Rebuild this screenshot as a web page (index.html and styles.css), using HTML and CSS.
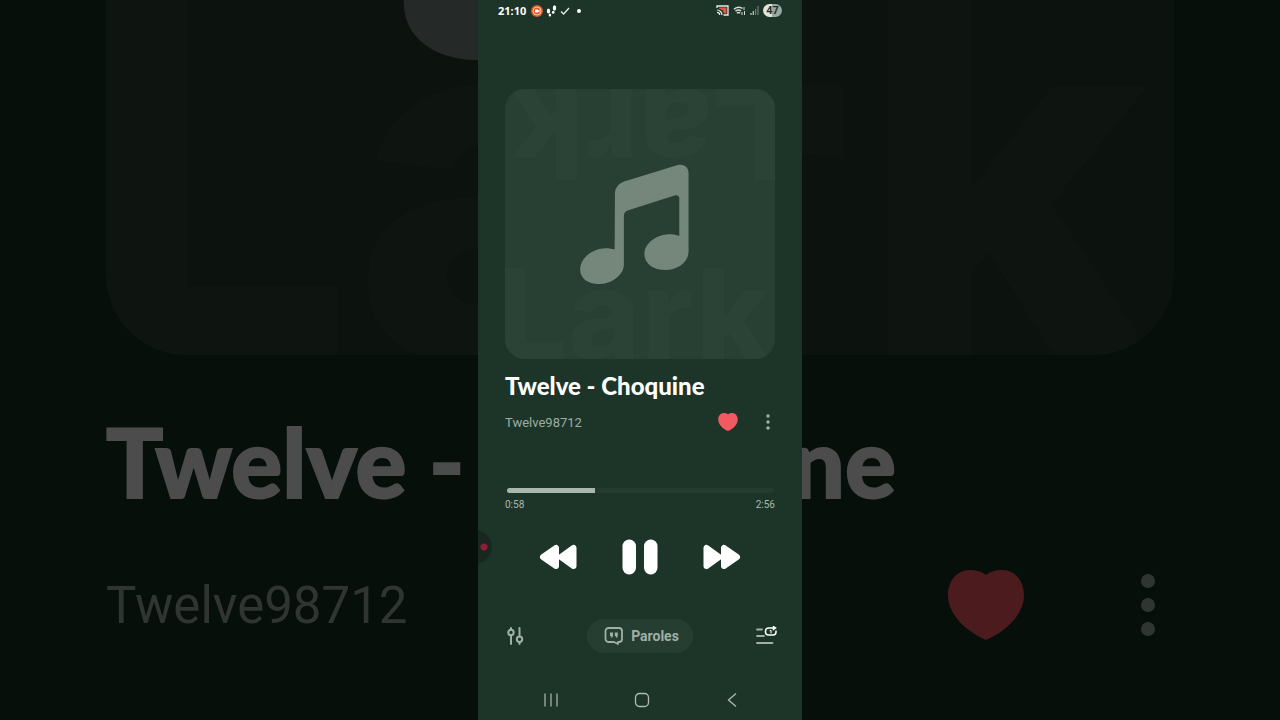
FILE: index.html
```
<!DOCTYPE html>
<html lang="fr">
<head>
  <meta charset="UTF-8">
  <meta name="viewport" content="width=device-width, initial-scale=1">
  <title>Twelve - Choquine</title>
  <link rel="stylesheet" href="styles.css">
</head>
<body>
  <svg class="symbols" aria-hidden="true">
    <symbol id="note" viewBox="0 0 328 362">
      <path d="M105 90C105 70 118 57 135 52L292 4C310 -1 327 8 327 27V265C327 295 295 320 258 320C220 320 194 300 194 272C194 238 232 212 271 212C282 212 291 214 299 217V102C299 96 292 93 285 95L150 138C138 142 132 146 132 157V303C132 335 95 362 56 362C24 362 0 345 0 318C0 284 38 254 77 254C88 254 97 256 104 258Z"/>
    </symbol>
    <symbol id="heart" viewBox="0 0 76 70">
      <path d="M38 5C43 1 49 0 54 0C68 0 76 12 76 25C76 46 56 62 38 70C20 62 0 46 0 25C0 12 8 0 22 0C27 0 33 1 38 5Z"/>
    </symbol>
    <symbol id="dots" viewBox="0 0 16 64">
      <circle cx="8" cy="8" r="7"/><circle cx="8" cy="32" r="7"/><circle cx="8" cy="56" r="7"/>
    </symbol>
  </svg>

  <div class="backdrop" aria-hidden="true">
    <div class="backdrop-art">
      <span class="backdrop-word">Lark</span>
      <svg class="backdrop-note"><use href="#note"/></svg>
    </div>
    <div class="backdrop-title">Twelve - Choquine</div>
    <div class="backdrop-row">
      <span class="backdrop-artist">Twelve98712</span>
      <svg class="backdrop-heart"><use href="#heart"/></svg>
      <svg class="backdrop-dots"><use href="#dots"/></svg>
    </div>
  </div>

  <main class="phone">
    <header class="status-bar">
      <span class="clock">21:10</span>
      <svg class="status-icon" width="12" height="12" viewBox="0 0 12 12">
        <circle cx="6" cy="6" r="6" fill="#e2572b"/>
        <circle cx="6" cy="6" r="4" fill="none" stroke="#f6c9a5"/>
        <path d="M4 4.500h3v1l1.500-1v3l-1.500-1v1H4z" fill="#fff"/>
      </svg>
      <svg class="status-icon" width="11" height="12" viewBox="0 0 11 12" fill="#fff">
        <ellipse cx="2.500" cy="6" rx="1.700" ry="2.500"/><ellipse cx="3.900" cy="10" rx="1.300" ry="1.500"/>
        <ellipse cx="8.500" cy="3" rx="1.700" ry="2.700"/><ellipse cx="7.200" cy="7.200" rx="1.300" ry="1.500"/>
      </svg>
      <svg class="status-icon" width="10" height="10" viewBox="0 0 10 10">
        <path d="M1 5.500L3.600 8L9 2" fill="none" stroke="#e4ebe7" stroke-width="1.300"/>
      </svg>
      <svg class="status-icon status-dot" width="4" height="4" viewBox="0 0 4 4"><circle cx="2" cy="2" r="2" fill="#fff"/></svg>

      <div class="status-right">
        <svg width="13" height="11" viewBox="0 0 13 11">
          <path d="M1 3V1h11v9H7.500" fill="none" stroke="#e8ecea" stroke-width="1.300"/>
          <path d="M3 2.500h7.500v6H8C7.500 5.500 5.500 4 3 3.800z" fill="#e2583f"/>
          <path d="M1 5a5 5 0 0 1 5 5M1 7.300A2.700 2.700 0 0 1 3.700 10" fill="none" stroke="#e8ecea" stroke-width="1.200"/>
        </svg>
        <svg width="13" height="10" viewBox="0 0 13 10" fill="none" stroke="#d5dcd8" stroke-width="1.500">
          <path d="M1 3.200C3.500 .6 7.500 .6 9.500 2.500M2.500 5.300C4 3.600 6.500 3.600 8 5M4 7.300c1-1 2-1 3 0"/>
          <path d="M9 6v3M11.500 9V5M11 1v3" stroke-width="1"/>
        </svg>
        <svg width="9" height="9" viewBox="0 0 9 9">
          <path d="M1 7v2M3.300 5v4" stroke="#c9d1cd" stroke-width="1.200"/>
          <path d="M5.600 3v6M8 0v9" stroke="#6f7f76" stroke-width="1.200"/>
        </svg>
        <span class="battery">47</span>
      </div>
    </header>

    <div class="art">
      <span class="art-word art-word-top" aria-hidden="true">Lark</span>
      <svg class="art-note" role="img" aria-label="Musique"><use href="#note"/></svg>
      <span class="art-word art-word-bottom" aria-hidden="true">Lark</span>
    </div>

    <h1 class="title">Twelve - Choquine</h1>
    <div class="artist-row">
      <span class="artist">Twelve98712</span>
      <button class="icon-button" aria-label="Favori">
        <svg class="heart" width="20" height="18"><use href="#heart"/></svg>
      </button>
      <button class="icon-button more" aria-label="Plus">
        <svg width="4" height="16"><use href="#dots"/></svg>
      </button>
    </div>

    <input class="seek" type="range" min="0" max="176" value="58" aria-label="Position" style="--played: 33%">
    <div class="times">
      <span>0:58</span>
      <span>2:56</span>
    </div>

    <div class="controls">
      <button class="icon-button" aria-label="Précédent">
        <svg width="38" height="26" viewBox="0 0 38 26" fill="#fff" stroke="#fff" stroke-width="6" stroke-linejoin="round">
          <path d="M4 13L17 4V22ZM22 13L34.500 4V22Z"/>
        </svg>
      </button>
      <button class="icon-button" aria-label="Pause">
        <svg width="36" height="36" viewBox="0 0 36 36" fill="#fff">
          <rect x=".5" y=".5" width="13.500" height="35" rx="6.700"/>
          <rect x="22" y=".5" width="13.500" height="35" rx="6.700"/>
        </svg>
      </button>
      <button class="icon-button" aria-label="Suivant">
        <svg width="38" height="26" viewBox="0 0 38 26" fill="#fff" stroke="#fff" stroke-width="6" stroke-linejoin="round">
          <path d="M34 13L21 4V22ZM16 13L3.500 4V22Z"/>
        </svg>
      </button>
    </div>

    <div class="tools">
      <button class="icon-button" aria-label="Égaliseur">
        <svg width="20" height="20" viewBox="0 0 20 20" fill="none" stroke="#9fb0a6" stroke-width="2" stroke-linecap="round">
          <path d="M6 2v1.500M6 9v9M14.500 2v8.500M14.500 16.500V18"/>
          <circle cx="6" cy="6.500" r="2.700"/><circle cx="14.500" cy="13.200" r="2.700"/>
        </svg>
      </button>
      <button class="lyrics">
        <svg width="20" height="20" viewBox="0 0 20 20">
          <path d="M4.500 2h10.500a3 3 0 0 1 3 3v8a3 3 0 0 1-3 3h-1v2l-4-2H4.500a3 3 0 0 1-3-3V5a3 3 0 0 1 3-3z" fill="none" stroke="#9fb0a6" stroke-width="1.800" stroke-linejoin="round"/>
          <path d="M6 6.500h3v3c0 1.500-.8 2.300-2 2.700.4-.8.500-1.400.3-2H6zM10.800 6.500h3v3c0 1.500-.8 2.300-2 2.700.4-.8.500-1.400.3-2h-1.300z" fill="#9fb0a6"/>
        </svg>
        Paroles
      </button>
      <button class="icon-button" aria-label="File d'attente">
        <svg width="22" height="20" viewBox="0 0 22 20" fill="none" stroke-linecap="round">
          <path d="M2 3.500h5M2 10h7M2 17h15.500" stroke="#9fb0a6" stroke-width="1.800"/>
          <path d="M19 2h-5.500a3 3 0 0 0-3 3v1a3 3 0 0 0 3 3h4.500a3 3 0 0 0 3-3V5M18.500 .7l2 1.300L18.500 3.300z" stroke="#fff" stroke-width="1.500"/>
          <path d="M15 4.700l1-.6v3" stroke="#fff"/>
        </svg>
      </button>
    </div>

    <nav class="system-nav">
      <button class="icon-button" aria-label="Applications récentes">
        <svg width="16" height="16" viewBox="0 0 16 16" stroke="#aebbb4" stroke-width="1.200"><path d="M2 1.500v13M8 1.500v13M14 1.500v13"/></svg>
      </button>
      <button class="icon-button" aria-label="Accueil">
        <svg width="16" height="16" viewBox="0 0 16 16"><rect x="1.500" y="1.500" width="13" height="13" rx="4" fill="none" stroke="#aebbb4" stroke-width="1.300"/></svg>
      </button>
      <button class="icon-button" aria-label="Retour">
        <svg width="16" height="16" viewBox="0 0 16 16"><path d="M12 1.500L4.500 8l7.500 6.500" fill="none" stroke="#aebbb4" stroke-width="1.300"/></svg>
      </button>
    </nav>

    <span class="record-bubble"></span>
  </main>
</body>
</html>
```
FILE: styles.css
```
* {
  box-sizing: border-box;
}

body {
  margin: 0;
  min-height: 100vh;
  display: flex;
  justify-content: center;
  position: relative;
  overflow: hidden;
  background-color: #060f0a;
  font-family: Roboto, sans-serif;
}

svg {
  display: block;
  flex-shrink: 0;
}

.symbols {
  position: absolute;
  width: 0;
  height: 0;
}

/* enlarged, darkened copy of the player behind the phone */
.backdrop {
  position: absolute;
  inset: 0;
  padding: 0 106px;
  overflow: hidden;
  white-space: nowrap;
}

.backdrop-art {
  position: relative;
  height: 355px;
  overflow: hidden;
  border-radius: 0 0 80px 80px;
  background-color: #0c130e;
}

.backdrop-word {
  position: absolute;
  left: -32px;
  bottom: 0;
  font-family: Inter, sans-serif;
  font-weight: 800;
  font-size: 494px;
  line-height: 358px;
  color: #0e1410;
}

.backdrop-note {
  position: absolute;
  left: 297px;
  bottom: 295px;
  width: 431px;
  height: 474px;
  fill: #252927;
}

.backdrop-title {
  margin-top: 56px;
  font-family: Lato, sans-serif;
  font-weight: 900;
  font-size: 95px;
  line-height: 100px;
  color: #4c4c4c;
  -webkit-text-stroke: 2px #4c4c4c;
}

.backdrop-row {
  display: flex;
  align-items: center;
  height: 80px;
  margin-top: 54px;
  padding-right: 18px;
}

.backdrop-artist {
  flex: 1;
  font-size: 51px;
  color: #303532;
}

.backdrop-heart {
  width: 76px;
  height: 70px;
  fill: #4b1b1e;
}

.backdrop-dots {
  width: 16px;
  height: 64px;
  margin-left: 116px;
  fill: #303532;
}

.phone {
  position: relative;
  display: flex;
  flex-direction: column;
  height: 100vh;
  min-height: 720px;
  aspect-ratio: 9 / 20;
  padding: 0 27px;
  overflow: hidden;
  background-color: #1d3529;
  color: #fff;
}

.status-bar {
  display: flex;
  align-items: center;
  height: 21px;
  margin: 0 -7px;
}

.clock {
  font-family: "Noto Sans", sans-serif;
  font-size: 11px;
  font-weight: 700;
  line-height: 20px;
  margin-right: 5px;
}

.status-icon {
  margin-right: 3px;
}

.status-dot {
  margin-left: 4px;
}

.status-right {
  display: flex;
  align-items: center;
  gap: 4px;
  margin-left: auto;
}

.battery {
  width: 19px;
  border-radius: 7px;
  background: linear-gradient(90deg, #dfe4e1 50%, #9ba8a1 50%);
  color: #1d3529;
  font-size: 11px;
  font-weight: 700;
  line-height: 13px;
  text-align: center;
}

.art {
  position: relative;
  display: flex;
  align-items: center;
  justify-content: center;
  width: 100%;
  aspect-ratio: 1;
  margin-top: 68px;
  overflow: hidden;
  border-radius: 20px;
  background-color: #283f33;
}

.art-note {
  position: relative;
  width: 109px;
  height: 120px;
  margin-right: 12px;
  fill: #75867b;
}

.art-word {
  position: absolute;
  font-family: Inter, sans-serif;
  font-weight: 800;
  font-size: 125px;
  line-height: 90px;
  color: #2b4236;
}

.art-word-top {
  top: 0;
  right: -8px;
  transform: rotate(180deg);
}

.art-word-bottom {
  bottom: 0;
  left: -8px;
}

.title {
  margin: 12px 0 0;
  font-family: Lato, sans-serif;
  font-weight: 900;
  font-size: 24px;
  line-height: 30px;
  white-space: nowrap;
}

.artist-row {
  display: flex;
  align-items: center;
  height: 20px;
  margin-top: 11px;
  padding-right: 5px;
}

.artist {
  flex: 1;
  font-size: 13px;
  color: #9dada4;
}

.icon-button {
  padding: 0;
  border: none;
  background: none;
  cursor: pointer;
}

.heart {
  fill: #f05a60;
}

.more {
  margin-left: 28px;
  fill: #9fb0a6;
}

.seek {
  appearance: none;
  height: 5px;
  margin: 56px 1px 0 2px;
  border-radius: 3px;
  background: linear-gradient(90deg, #a9b8af var(--played), #243b2f var(--played));
  cursor: pointer;
}

.seek::-webkit-slider-thumb {
  appearance: none;
  width: 0;
  height: 0;
}

.times {
  display: flex;
  justify-content: space-between;
  margin-top: 6px;
  font-size: 10px;
  line-height: 12px;
  color: #a9b8af;
}

.controls {
  display: flex;
  align-items: center;
  justify-content: space-between;
  height: 36px;
  margin-top: 28px;
  padding: 0 34px;
}

.tools {
  display: flex;
  align-items: center;
  justify-content: space-between;
  height: 34px;
  margin: 44px -2px 0 0;
}

.lyrics {
  display: flex;
  align-items: center;
  gap: 7px;
  height: 34px;
  padding: 0 14px 0 17px;
  border: none;
  border-radius: 17px;
  background-color: #263d31;
  color: #9fb0a6;
  font-family: Roboto, sans-serif;
  font-size: 14px;
  font-weight: 700;
  cursor: pointer;
}

.system-nav {
  display: flex;
  justify-content: space-between;
  margin-top: 39px;
  padding: 0 35px 0 38px;
}

/* floating screen recorder handle, half off the left edge */
.record-bubble {
  position: absolute;
  left: -20px;
  top: 530px;
  width: 34px;
  height: 34px;
  border-radius: 50%;
  background: radial-gradient(circle at 26px 17px, #8f1d38 3px, #182820 4px);
}
```
